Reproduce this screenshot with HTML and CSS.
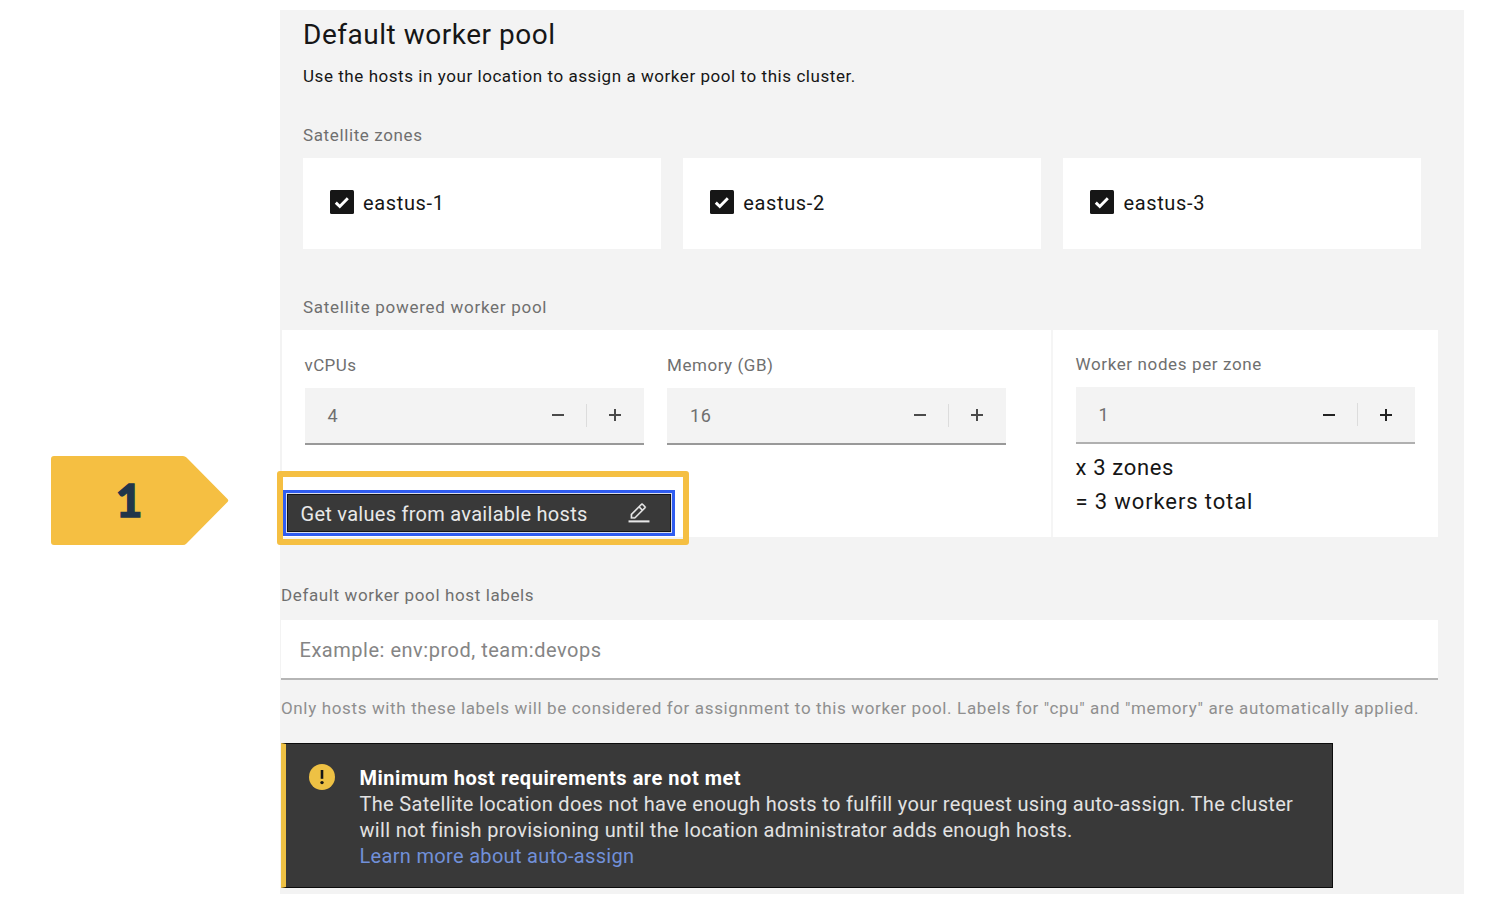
FILE: index.html
```html
<!DOCTYPE html>
<html lang="en">
<head>
<meta charset="utf-8">
<title>Default worker pool</title>
<link rel="stylesheet" href="styles.css">
</head>
<body>
<main class="panel">
  <header class="intro">
    <h1 class="title">Default worker pool</h1>
    <p class="desc">Use the hosts in your location to assign a worker pool to this cluster.</p>
  </header>

  <section class="zones">
    <h2 class="label label-zones">Satellite zones</h2>
    <div class="zone-grid">
      <label class="zone"><svg class="check" viewBox="0 0 24 24"><rect width="24" height="24" rx="1.5" fill="#161616"/><path d="M5.800 12.600l4 3.900 8-8.200" fill="none" stroke="#fff" stroke-width="2.900"/></svg><span>eastus-1</span></label>
      <label class="zone"><svg class="check" viewBox="0 0 24 24"><rect width="24" height="24" rx="1.5" fill="#161616"/><path d="M5.800 12.600l4 3.900 8-8.200" fill="none" stroke="#fff" stroke-width="2.900"/></svg><span>eastus-2</span></label>
      <label class="zone"><svg class="check" viewBox="0 0 24 24"><rect width="24" height="24" rx="1.5" fill="#161616"/><path d="M5.800 12.600l4 3.900 8-8.200" fill="none" stroke="#fff" stroke-width="2.900"/></svg><span>eastus-3</span></label>
    </div>
  </section>

  <h2 class="label label-pool">Satellite powered worker pool</h2>
  <section class="pool">
    <div class="pool-main">
      <div class="fields">
        <div class="field">
          <div class="label label-cpu">vCPUs</div>
          <div class="stepper"><span class="value">4</span><i class="minus"></i><i class="rule"></i><i class="plus"></i></div>
        </div>
        <div class="field">
          <div class="label label-mem">Memory (GB)</div>
          <div class="stepper"><span class="value">16</span><i class="minus"></i><i class="rule"></i><i class="plus"></i></div>
        </div>
      </div>
      <button class="get-values"><span>Get values from available hosts</span>
        <svg class="edit" viewBox="0 0 32 32" fill="#e8e8e8"><path d="M1 27h30v2.600H1zM25.400 9c.8-.8.8-2 0-2.800l-3.600-3.600c-.8-.8-2-.8-2.800 0l-15 15V24h6.400zM20.400 4L24 7.600l-3 3L17.400 7zM6 22v-3.600l10-10 3.600 3.600-10 10z" stroke="#e8e8e8" stroke-width=".4"/></svg>
      </button>
    </div>
    <div class="pool-side">
      <div class="label label-nodes">Worker nodes per zone</div>
      <div class="stepper active"><span class="value">1</span><i class="minus"></i><i class="rule"></i><i class="plus"></i></div>
      <p class="total total-zones">x 3 zones</p>
      <p class="total total-workers">= 3 workers total</p>
    </div>
  </section>

  <section class="hosts">
    <div class="label label-hosts">Default worker pool host labels</div>
    <div class="text-input">Example: env:prod, team:devops</div>
    <p class="helper">Only hosts with these labels will be considered for assignment to this worker pool. Labels for "cpu" and "memory" are automatically applied.</p>
  </section>

  <aside class="notice">
    <svg class="warn" viewBox="0 0 26 26"><circle cx="13" cy="13" r="13" fill="#eec144"/><path d="M11.700 6h2.600v8.800h-2.600z" fill="#161616"/><circle cx="13" cy="18.600" r="1.700" fill="#161616"/></svg>
    <div class="notice-body">
      <h3 class="notice-title">Minimum host requirements are not met</h3>
      <p>The Satellite location does not have enough hosts to fulfill your request using auto-assign. The cluster<br>will not finish provisioning until the location administrator adds enough hosts.</p>
      <a class="notice-link">Learn more about auto-assign</a>
    </div>
  </aside>
</main>

<div class="highlight"></div>
<div class="step">
  <svg class="step-shape" viewBox="0 0 178 89"><path d="M3 0h129q2 0 3.500 1.500L176.500 43q1.500 1.500 0 3L135.500 87.500Q134 89 132 89H3Q0 89 0 86V3Q0 0 3 0z" fill="#f5bf42"/></svg>
  <span class="step-num">1</span>
</div>
</body>
</html>
```
FILE: styles.css
```css
* { box-sizing: border-box; }
body { margin: 0; background: #fff; font-family: Roboto, "Noto Sans", sans-serif; color: #161616; }
h1, h2, h3, p { margin: 0; font-weight: 400; white-space: nowrap; }
span { white-space: nowrap; }

.panel { width: 1184px; height: 884px; margin: 10px 0 0 280px; background: #f3f3f3; overflow: hidden; }
.intro { padding: 5px 0 0 23px; }
.title { font-size: 28px; line-height: 40px; letter-spacing: .52px; }
.desc { margin-top: 11px; font-size: 17px; line-height: 20px; letter-spacing: .555px; }

.label { font-size: 17px; line-height: 20px; color: #6f6f6f; letter-spacing: .62px; }
.label-cpu { letter-spacing: .4px; }
.label-mem { letter-spacing: .55px; }
.zones { padding: 39px 0 0 23px; }
.zone-grid { display: grid; grid-template-columns: repeat(3, 357.500px); gap: 22.700px; margin-top: 12.700px; }
.zone { display: flex; align-items: center; gap: 9.500px; height: 91.500px; padding-left: 26.500px; background: #fff; font-size: 20px; letter-spacing: .65px; }
.check { width: 24px; height: 24px; margin-bottom: 3px; }
.label-pool { margin: 47.500px 0 0 23px; letter-spacing: .72px; }

.pool { display: flex; width: 1156px; height: 206.700px; margin: 13.300px 0 0 1.500px; background: #fff; }
.pool-main { width: 771px; padding-top: 25px; border-right: 2px solid #f5f5f5; }
.fields { display: flex; gap: 23.500px; padding-left: 23px; }
.field { width: 339px; }
.stepper { display: flex; align-items: center; height: 57px; margin-top: 13px; padding: 0 23px; border-bottom: 2px solid #999; background: #f3f3f3; color: #6f6f6f; font-size: 18px; letter-spacing: .6px; }
.value { flex: 1; }
.minus, .plus { position: relative; width: 12px; height: 12px; color: #4a4a4a; }
.minus::before, .plus::before, .plus::after { content: ""; position: absolute; left: 0; top: 5px; width: 12px; height: 2px; background: currentColor; }
.plus::after { left: 5px; top: 0; width: 2px; height: 12px; }
.rule { width: 1px; height: 23px; margin: 0 22px; background: #dcdcdc; }
.active { border-color: #b0b0b0; }
.active .minus, .active .plus { color: #222; }

.get-values { display: flex; align-items: center; justify-content: space-between; width: 392px; height: 46px; margin: 45px 0 0 1px; padding: 0 22px 0 15px; border: 3px solid #2f5cf0; background: #393939; box-shadow: inset 0 0 0 1px #d9dcea, inset 0 0 0 2px #151515; color: #e8e8e8; font: 20px Roboto, "Noto Sans", sans-serif; letter-spacing: .28px; }
.get-values span { padding-top: 2px; }
.edit { width: 22px; height: 22px; }

.pool-side { padding: 24.500px 0 0 23px; width: 362px; }
.total { font-size: 22px; line-height: 34px; }
.total-zones { margin-top: 7px; letter-spacing: .65px; }
.total-workers { letter-spacing: .88px; }

.hosts { padding: 48.800px 0 0 1px; }
.text-input { display: flex; align-items: center; width: 1157px; height: 60px; margin-top: 15px; padding: 1px 0 0 18.500px; border-bottom: 2px solid #b5b5b5; background: #fff; color: #858585; font-size: 20px; letter-spacing: .52px; }
.helper { margin-top: 18px; font-size: 17px; line-height: 20px; letter-spacing: .64px; color: #8f8f8f; }

.notice { display: flex; width: 1052px; height: 145.500px; margin: 24.500px 0 0 1px; padding: 20.500px 0 0 23px; border: 1px solid #0c0c0c; border-left: 5px solid #eec144; background: #393939; color: #e2e2e2; font-size: 20px; line-height: 26px; letter-spacing: .318px; }
.warn { width: 26px; height: 26px; }
.notice-body { margin-left: 24.500px; padding-top: 1px; }
.notice-title { font-size: 20px; font-weight: 700; letter-spacing: .52px; color: #fff; }
.notice-link { color: #7190d8; }

.highlight { position: absolute; left: 277px; top: 471px; width: 412px; height: 74px; border: 6px solid #f5bf42; border-radius: 3px; }
.step { position: absolute; left: 51px; top: 456px; width: 178px; height: 89px; }
.step-shape { display: block; width: 178px; height: 89px; }
.step-num { position: absolute; left: 0; top: -1px; width: 156px; text-align: center; font: 900 46px/89px Lato, sans-serif; color: #22354a; -webkit-text-stroke: 1.300px #22354a; }
```
